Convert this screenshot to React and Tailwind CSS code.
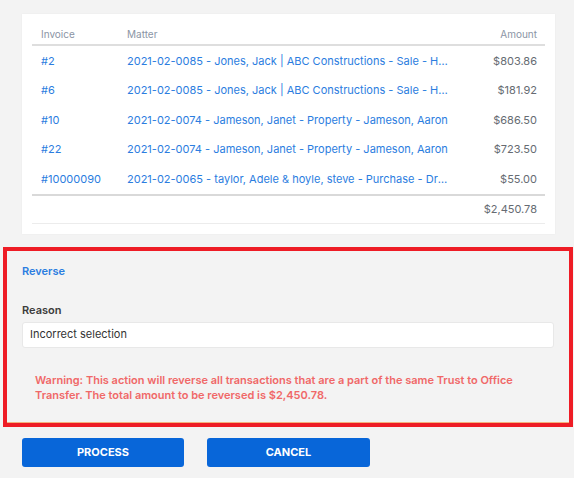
import React from "react";

const rows = [
  { inv: "#2", matter: "2021-02-0085 - Jones, Jack | ABC Constructions - Sale - Hunter St", amt: "$803.86" },
  { inv: "#6", matter: "2021-02-0085 - Jones, Jack | ABC Constructions - Sale - Hunter St", amt: "$181.92" },
  { inv: "#10", matter: "2021-02-0074 - Jameson, Janet - Property - Jameson, Aaron", amt: "$686.50" },
  { inv: "#22", matter: "2021-02-0074 - Jameson, Janet - Property - Jameson, Aaron", amt: "$723.50" },
  { inv: "#10000090", matter: "2021-02-0065 - taylor, Adele & hoyle, steve - Purchase - Drake Rd", amt: "$55.00" },
];

export default function App() {
  return (
    <div className="min-h-[478px] w-[574px] bg-[#f3f3f3] pt-[14px] text-[11px] font-['Inter',sans-serif]">
      <div className="mx-[22px] w-[533px] bg-white px-[10px] pb-[10px] pt-[9px] shadow-[0_0_2px_rgba(0,0,0,0.04)]">
        <div className="grid h-[23px] grid-cols-[86px_340px_87px] items-end border-b-2 border-[#dedede] pb-[2px] text-[10px] text-[#8b95a5]">
          <div className="px-[9px]">Invoice</div>
          <div className="px-[9px]">Matter</div>
          <div className="px-[8px] text-right">Amount</div>
        </div>
        {rows.map((r) => (
          <div key={r.inv + r.amt} className="grid h-[29.5px] grid-cols-[86px_340px_87px] items-center">
            <div className="px-[9px] text-[#2b7de0]">{r.inv}</div>
            <div className="px-[9px] text-[#2b7de0]">
              <span className="block max-w-[328px] truncate">{r.matter}</span>
            </div>
            <div className="px-[8px] text-right text-[#666b72]">{r.amt}</div>
          </div>
        ))}
        <div className="grid h-[30px] grid-cols-[86px_340px_87px] items-center border-b border-t-2 border-b-[#ececec] border-t-[#d9d9d9]">
          <div />
          <div />
          <div className="px-[8px] text-right text-[#666b72]">$2,450.78</div>
        </div>
      </div>

      <div className="ml-[3px] mt-[13px] w-[570px] border-4 border-[#ee1c25] bg-[#f3f3f3]">
        <div className="border-b border-[#f3b27e] px-[15px] pb-[18px] pt-[12px]">
          <div className="font-semibold leading-[16px] text-[#2b7de0]">Reverse</div>
          <div className="mt-[23px] font-semibold leading-[16px] text-[#3c3c3c]">Reason</div>
          <div className="mt-[4px] flex h-[26px] items-center rounded-[3px] border border-[#e8e8e8] bg-white px-[7px] text-[#333]">
            Incorrect selection
          </div>
          <div className="mt-[25px] px-[13px] font-semibold leading-[15.5px] text-[#f06868]">
            Warning: This action will reverse all transactions that are a part of the same Trust to Office Transfer. The
            total amount to be reversed is $2,450.78.
          </div>
        </div>
      </div>

      <div className="mt-[11px] flex gap-[23px] px-[22px]">
        <button className="h-[29px] w-[162px] rounded-[3px] bg-[#0866d9] text-[11px] font-bold text-white">PROCESS</button>
        <button className="h-[29px] w-[163px] rounded-[3px] bg-[#0866d9] text-[11px] font-bold text-white">CANCEL</button>
      </div>
    </div>
  );
}
